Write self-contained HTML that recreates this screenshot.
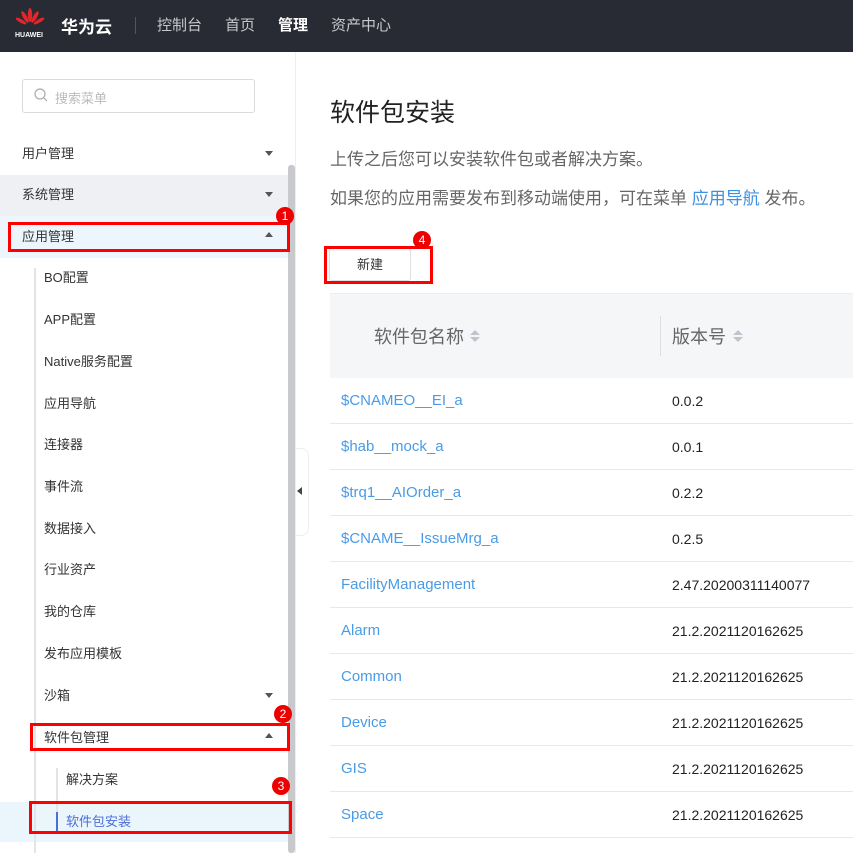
<!DOCTYPE html>
<html><head><meta charset="utf-8"><style>
*{margin:0;padding:0;box-sizing:border-box}
body{width:853px;height:853px;overflow:hidden;position:relative;background:#fff;font-family:"Liberation Sans","Noto Sans CJK SC",sans-serif}
.a{position:absolute;white-space:nowrap}
.hd{left:0;top:0;width:853px;height:52px;background:#282b33}
.nav{color:#c6c8cc;font-size:15px;top:14px}
.mi{font-size:13px;color:#333;line-height:20px}
.tri{position:absolute;width:0;height:0;border-left:4px solid transparent;border-right:4px solid transparent}
.dn{border-top:5px solid #555}
.up{border-bottom:5px solid #555}
.red{position:absolute;border:3px solid #f00}
.bd{position:absolute;width:18px;height:18px;border-radius:50%;background:#e00;color:#fff;font-size:12px;text-align:center;line-height:18px}
.row{position:absolute;left:330px;width:523px;height:46px;border-bottom:1px solid #e6e8eb}
.lk{position:absolute;left:11px;top:14px;color:#4a9be6;font-size:15px}
.vr{position:absolute;left:342px;top:15px;color:#222;font-size:14px}
</style></head><body>
<div class="a hd"></div>
<svg class="a" style="left:15px;top:8px" width="30" height="22" viewBox="0 0 30 22">
<g fill="#e3262c"><ellipse cx="15" cy="7" rx="2.2" ry="7"/><ellipse cx="10" cy="9" rx="2" ry="6.5" transform="rotate(-30 10 9)"/><ellipse cx="20" cy="9" rx="2" ry="6.5" transform="rotate(30 20 9)"/><ellipse cx="6" cy="13" rx="1.8" ry="6" transform="rotate(-60 6 13)"/><ellipse cx="24" cy="13" rx="1.8" ry="6" transform="rotate(60 24 13)"/></g></svg>
<div class="a" style="left:15px;top:32px;color:#fff;font-size:7px;font-weight:bold">HUAWEI</div>
<div class="a" style="left:61px;top:13px;color:#fff;font-size:17px;font-weight:bold">华为云</div>
<div class="a" style="left:135px;top:17px;width:1px;height:17px;background:#555"></div>
<div class="a nav" style="left:157px">控制台</div>
<div class="a nav" style="left:225px">首页</div>
<div class="a nav" style="left:278px;color:#fff;font-weight:bold">管理</div>
<div class="a nav" style="left:331px">资产中心</div>

<div class="a" style="left:22px;top:79px;width:233px;height:34px;border:1px solid #d9dbde;border-radius:3px"></div>
<svg class="a" style="left:34px;top:88px" width="14" height="14"><circle cx="6" cy="6" r="5" fill="none" stroke="#aaa" stroke-width="1.2"/><line x1="10" y1="10" x2="13" y2="13" stroke="#aaa" stroke-width="1.2"/></svg>
<div class="a" style="left:55px;top:88px;color:#bbb;font-size:13px">搜索菜单</div>

<div class="a" style="left:0;top:175px;width:288px;height:41px;background:#eef0f3"></div>
<div class="a" style="left:0;top:216px;width:288px;height:42px;background:#eef6fd"></div>
<div class="a" style="left:0;top:802px;width:288px;height:40px;background:#eaf5fc"></div>
<div class="a" style="left:288px;top:165px;width:7px;height:688px;background:#c8c9cc;border-radius:3px"></div>
<div class="a" style="left:295px;top:52px;width:1px;height:801px;background:#eceef0"></div>
<div class="a" style="left:296px;top:448px;width:13px;height:88px;background:#fff;border:1px solid #eee;border-left:none;border-radius:0 8px 8px 0"></div>
<div class="tri" style="left:297px;top:487px;border:4px solid transparent;border-right:5px solid #444;border-left:none"></div>

<div class="a" style="left:34px;top:268px;width:2px;height:585px;background:#e2e4e8"></div>
<div class="a" style="left:56px;top:768px;width:2px;height:62px;background:#e2e4e8"></div>
<div class="a" style="left:56px;top:812px;width:2px;height:20px;background:#4a6fd6"></div>

<div class="a mi" style="left:22px;top:144px">用户管理</div><div class="tri dn" style="left:265px;top:151px"></div>
<div class="a mi" style="left:22px;top:185px">系统管理</div><div class="tri dn" style="left:265px;top:192px"></div>
<div class="a mi" style="left:22px;top:227px">应用管理</div><div class="tri up" style="left:265px;top:232px"></div>
<div class="a mi" style="left:44px;top:268px">BO配置</div>
<div class="a mi" style="left:44px;top:310px">APP配置</div>
<div class="a mi" style="left:44px;top:352px">Native服务配置</div>
<div class="a mi" style="left:44px;top:394px">应用导航</div>
<div class="a mi" style="left:44px;top:435px">连接器</div>
<div class="a mi" style="left:44px;top:477px">事件流</div>
<div class="a mi" style="left:44px;top:519px">数据接入</div>
<div class="a mi" style="left:44px;top:560px">行业资产</div>
<div class="a mi" style="left:44px;top:602px">我的仓库</div>
<div class="a mi" style="left:44px;top:644px">发布应用模板</div>
<div class="a mi" style="left:44px;top:686px">沙箱</div><div class="tri dn" style="left:265px;top:693px"></div>
<div class="a mi" style="left:44px;top:728px">软件包管理</div><div class="tri up" style="left:265px;top:733px"></div>
<div class="a mi" style="left:66px;top:770px">解决方案</div>
<div class="a mi" style="left:66px;top:812px;color:#4a6fd6">软件包安装</div>

<div class="a" style="left:330px;top:93px;font-size:25px;color:#222">软件包安装</div>
<div class="a" style="left:330px;top:145px;font-size:17px;color:#666">上传之后您可以安装软件包或者解决方案。</div>
<div class="a" style="left:330px;top:184px;font-size:17px;color:#666">如果您的应用需要发布到移动端使用，可在菜单 <span style="color:#3d8fe0">应用导航</span> 发布。</div>
<div class="a" style="left:329px;top:248px;width:82px;height:33px;border:1px solid #dcdfe3;border-radius:3px;font-size:13px;color:#333;text-align:center;line-height:31px">新建</div>

<div class="a" style="left:330px;top:293px;width:523px;height:85px;background:#f5f6f8;border-top:1px solid #eceef0"></div>
<div class="a" style="left:374px;top:323px;font-size:18px;color:#666">软件包名称</div>
<svg class="a" style="left:470px;top:329px" width="10" height="14"><path d="M0 6L5 1L10 6Z M0 8L5 13L10 8Z" fill="#c0c4cc"/></svg>
<div class="a" style="left:660px;top:316px;width:1px;height:40px;background:#dcdfe3"></div>
<div class="a" style="left:672px;top:323px;font-size:18px;color:#666">版本号</div>
<svg class="a" style="left:733px;top:329px" width="10" height="14"><path d="M0 6L5 1L10 6Z M0 8L5 13L10 8Z" fill="#c0c4cc"/></svg>

<div class="row" style="top:378px"><span class="lk">$CNAMEO__EI_a</span><span class="vr">0.0.2</span></div>
<div class="row" style="top:424px"><span class="lk">$hab__mock_a</span><span class="vr">0.0.1</span></div>
<div class="row" style="top:470px"><span class="lk">$trq1__AIOrder_a</span><span class="vr">0.2.2</span></div>
<div class="row" style="top:516px"><span class="lk">$CNAME__IssueMrg_a</span><span class="vr">0.2.5</span></div>
<div class="row" style="top:562px"><span class="lk">FacilityManagement</span><span class="vr">2.47.20200311140077</span></div>
<div class="row" style="top:608px"><span class="lk">Alarm</span><span class="vr">21.2.2021120162625</span></div>
<div class="row" style="top:654px"><span class="lk">Common</span><span class="vr">21.2.2021120162625</span></div>
<div class="row" style="top:700px"><span class="lk">Device</span><span class="vr">21.2.2021120162625</span></div>
<div class="row" style="top:746px"><span class="lk">GIS</span><span class="vr">21.2.2021120162625</span></div>
<div class="row" style="top:792px"><span class="lk">Space</span><span class="vr">21.2.2021120162625</span></div>

<div class="red" style="left:8px;top:222px;width:282px;height:30px"></div>
<div class="bd" style="left:276px;top:207px">1</div>
<div class="red" style="left:30px;top:723px;width:260px;height:28px"></div>
<div class="bd" style="left:274px;top:705px">2</div>
<div class="red" style="left:29px;top:801px;width:263px;height:33px"></div>
<div class="bd" style="left:272px;top:777px">3</div>
<div class="red" style="left:324px;top:246px;width:109px;height:38px"></div>
<div class="bd" style="left:413px;top:231px">4</div>
</body></html>
